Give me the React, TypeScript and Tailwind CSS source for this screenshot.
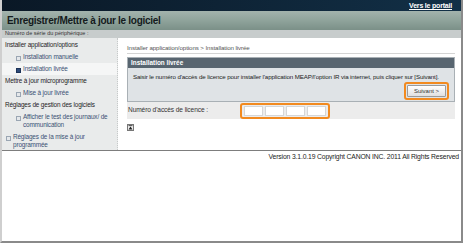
const menu = [
  {
    title: "Installer application/options",
    items: [
      { label: "Installation manuelle", active: false },
      { label: "Installation livrée", active: true },
    ],
  },
  {
    title: "Mettre à jour microprogramme",
    items: [{ label: "Mise à jour livrée", active: false }],
  },
  {
    title: "Réglages de gestion des logiciels",
    items: [{ label: "Afficher le test des journaux/ de communication", active: false }],
  },
];

function Bullet({ active }: { active: boolean }) {
  return (
    <span
      className={`mt-[3px] inline-block w-[5px] h-[5px] shrink-0 border ${
        active ? "bg-[#2c4a78] border-[#1c3358]" : "bg-[#e4e7ea] border-[#9aa6b3]"
      }`}
    />
  );
}

export default function App() {
  return (
    <div
      className="w-[463px] h-[243px] overflow-hidden bg-white flex flex-col border-l-2 border-l-[#cfcfcf] border-r-2 border-r-[#8a8a8a] border-b-2 border-b-[#8a8a8a] leading-none"
      style={{ fontFamily: '"Liberation Sans", Arial, sans-serif' }}
    >
      {/* top bar */}
      <div className="h-[11px] shrink-0 bg-gradient-to-r from-[#0a1826] to-[#123047] flex items-center justify-end pr-[9px]">
        <span className="text-white font-bold text-[7px] leading-none underline tracking-[-0.2px]">Vers le portail</span>
      </div>

      {/* title band */}
      <div className="h-[19px] shrink-0 bg-gradient-to-b from-[#a3b3ad] via-[#8fa39b] to-[#7b9088] flex items-center pl-[5px]">
        <h1 className="text-[#141a1c] font-bold text-[10px] leading-none tracking-[-0.3px]">
          Enregistrer/Mettre à jour le logiciel
        </h1>
      </div>

      <div className="h-[8px] shrink-0 bg-[#c7cccc] flex items-center pl-[3px]">
        <span className="text-[5.5px] text-[#333] leading-none">Numéro de série du périphérique :</span>
      </div>

      <div className="h-[113px] shrink-0 flex border-b border-b-[#7d7d7d]">
        {/* sidebar */}
        <div className="w-[116px] shrink-0 bg-[#e9ebeb] border-r border-dotted border-r-[#c6c9c9] pt-[1px] text-[6.4px] leading-[8px] tracking-[-0.15px]">
          {menu.map((g) => (
            <div key={g.title}>
              <div className="h-[12px] flex items-center pl-[3px] text-[#1f2326]">{g.title}</div>
              {g.items.map((it) => (
                <div
                  key={it.label}
                  className={`flex gap-[2px] pl-[14px] pr-[4px] py-[2px] min-h-[12px] ${it.active ? "bg-[#f5f6f6]" : ""}`}
                >
                  <Bullet active={it.active} />
                  <span className="text-[#3b5275]">{it.label}</span>
                </div>
              ))}
            </div>
          ))}
          <div className="flex gap-[2px] pl-[4px] pr-[4px] py-[2px]">
            <Bullet active={false} />
            <span className="text-[#3b5275]">Réglages de la mise à jour programmée</span>
          </div>
        </div>

        {/* main */}
        <div className="flex-1 pl-[9px] pr-[6px] pt-[6px]">
          <div className="text-[6.2px] text-[#555] leading-[8px] pb-[1px] border-b border-b-[#d4d4d4] tracking-[-0.1px]">
            Installer application/options &gt; Installation livrée
          </div>

          <div className="mt-[3px] border border-[#a9b0b5]">
            <div className="h-[10px] bg-[#586570] flex items-center pl-[3px]">
              <span className="text-white font-bold text-[6.4px] leading-none">Installation livrée</span>
            </div>
            <div className="h-[33px] bg-[#dfe3e6] pl-[5px] pr-[4px] pt-[5px]">
              <p className="text-[6.2px] leading-[8px] text-[#222] tracking-[-0.12px] whitespace-nowrap">
                Saisir le numéro d'accès de licence pour installer l'application MEAP/l'option IR via internet, puis cliquer sur [Suivant].
              </p>
              <div className="flex justify-end mt-[1px] pr-[1px]">
                <div className="flex border-2 border-[#f28a1f] rounded-[3px] p-[1px]">
                  <button className="h-[12px] w-[39px] bg-gradient-to-b from-white to-[#e0e0e0] border border-[#9a9a9a] rounded-[1px] text-[6px] text-[#333] leading-none">
                    Suivant &gt;
                  </button>
                </div>
              </div>
            </div>
          </div>

          <div className="h-[18px] bg-[#ececec] flex items-center border-b border-b-white">
            <span className="w-[113px] pl-[1px] text-[6.6px] text-[#333] tracking-[-0.1px]">Numéro d'accès de licence :</span>
            <div className="flex gap-[2px] border-2 border-[#f28a1f] rounded-[3px] px-[2px] py-[1px]">
              {[0, 1, 2, 3].map((i) => (
                <div key={i} className="w-[19px] h-[10px] bg-white border border-[#d6d6d6]" />
              ))}
            </div>
          </div>

          <div className="mt-[4px] w-[7px] h-[7px] border border-[#777] bg-[#eee] flex items-center justify-center">
            <svg width="5" height="5" viewBox="0 0 5 5">
              <rect x="0.5" y="0.3" width="4" height="0.8" fill="#222" />
              <polygon points="2.5,1.4 4.5,4.4 0.5,4.4" fill="#222" />
            </svg>
          </div>
        </div>
      </div>

      <div className="flex justify-end pr-[2px] pt-[2px]">
        <span className="text-[6.8px] text-[#222] leading-[8px] tracking-[-0.15px]">
          Version 3.1.0.19 Copyright CANON INC. 2011 All Rights Reserved
        </span>
      </div>
    </div>
  );
}
